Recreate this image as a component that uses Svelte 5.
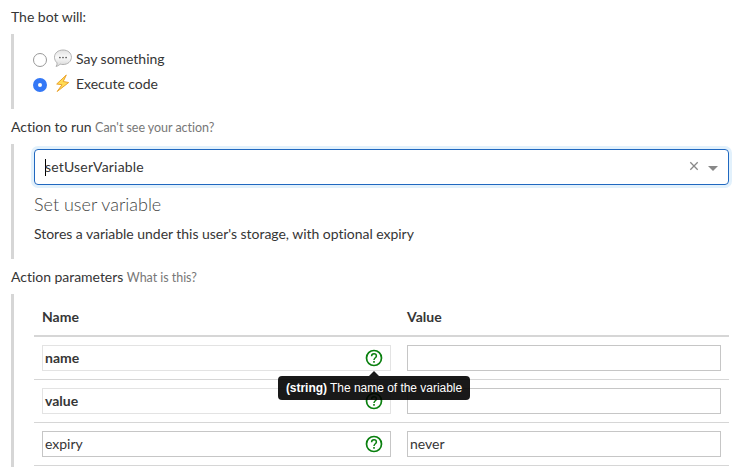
<script>
  let kind = $state('code');
  let rows = $state([
    { name: 'name', value: '', required: true, tip: 'The name of the variable' },
    { name: 'value', value: '', required: true },
    { name: 'expiry', value: 'never', required: false }
  ]);
</script>

<main>
  <div class="label">The bot will:</div>
  <section class="kinds">
    <label class="kind">
      <span class="radio" class:on={kind === 'say'}></span>
      <input type="radio" bind:group={kind} value="say" />
      <svg class="emoji" width="20" height="20" viewBox="0 0 20 20">
        <defs>
          <linearGradient id="bubble" x1="0" y1="0" x2="0" y2="1">
            <stop offset="0" stop-color="#e2e2e2" />
            <stop offset=".45" stop-color="#fafafa" />
            <stop offset="1" stop-color="#d6d6d6" />
          </linearGradient>
        </defs>
        <path d="M10 1c4.900 0 8.400 3 8.400 7.200s-3.500 7.300-8.400 7.300c-1 0-2-.1-2.900-.4-1.100 1.200-2.500 2.100-4.100 2.300.8-1 1.200-2.200 1.100-3.500C2.500 12.500 1.500 10.500 1.500 8.200 1.500 4 5.100 1 10 1z" fill="url(#bubble)" stroke="#aaa" stroke-width=".9" />
        <g fill="#555">
          <circle cx="6.900" cy="8.500" r=".85" />
          <circle cx="10" cy="8.500" r=".85" />
          <circle cx="13.100" cy="8.500" r=".85" />
        </g>
      </svg>
      <span>Say something</span>
    </label>
    <label class="kind">
      <span class="radio" class:on={kind === 'code'}></span>
      <input type="radio" bind:group={kind} value="code" />
      <svg class="emoji" width="20" height="20" viewBox="0 0 20 20">
        <path d="M13.300 1 3.700 10l5.300.7-4.800 6.800L15.700 8.500l-5.500-1z" fill="#ffdc55" stroke="#eba32d" stroke-width="1" stroke-linejoin="round" />
      </svg>
      <span>Execute code</span>
    </label>
  </section>

  <div class="label">Action to run <small>Can't see your action?</small></div>
  <section class="action">
    <div class="select">
      <i class="caret"></i>
      <span class="chosen">setUserVariable</span>
      <svg class="clear" width="10" height="10" viewBox="0 0 10 10"><path d="M1.300 1.300l7.400 7.400M8.700 1.300 1.300 8.700" stroke="#888" stroke-width="1.300" fill="none" /></svg>
      <svg class="arrow" width="10" height="5" viewBox="0 0 10 5"><path d="M0 0h10L5 5z" fill="#888" /></svg>
    </div>
    <h4>Set user variable</h4>
    <p>Stores a variable under this user's storage, with optional expiry</p>
  </section>

  <div class="label">Action parameters <small>What is this?</small></div>
  <section class="params">
    <div class="row head"><div>Name</div><div>Value</div></div>
    {#each rows as row}
      <div class="row">
        <div>
          <div class="field" class:required={row.required}>
            <span>{row.name}</span>
            <span class="help">
              <svg width="18" height="18" viewBox="0 0 18 18" fill="none" stroke="#0a800f">
                <circle cx="9" cy="9" r="7.500" stroke-width="1.700" />
                <path d="M6.600 7.200c0-1.500 1-2.400 2.400-2.400s2.400.9 2.400 2.200c0 1.700-2.400 1.900-2.400 4" stroke-width="1.500" />
                <path d="M9 12.100v1.600" stroke-width="1.600" />
              </svg>
              {#if row.tip}
                <span class="tip"><b>(string)</b> {row.tip}</span>
              {/if}
            </span>
          </div>
        </div>
        <div><div class="field">{row.value}</div></div>
      </div>
    {/each}
  </section>
</main>

<style>
  :global(body) { background: #fff; overflow: hidden; }
  main {
    box-sizing: border-box;
    height: 467px;
    overflow: hidden;
    padding: 7px 8px 0 11px;
    font: 14px/20px Lato, sans-serif;
    color: #363636;
  }
  .label { height: 20px; margin-bottom: 7px; white-space: nowrap; letter-spacing: -.03px; }
  small { font-size: 12.500px; letter-spacing: -.04px; color: #777; }
  section {
    box-sizing: border-box;
    border-left: 3px solid #d6d6d6;
    padding-left: 20px;
    margin-bottom: 8px;
  }
  .kinds { height: 75px; padding-top: 12px; }
  .kind { display: flex; align-items: center; height: 25px; letter-spacing: -.03px; }
  .kind input { position: absolute; opacity: 0; }
  .radio {
    box-sizing: border-box;
    width: 14px;
    height: 14px;
    margin: 2px 6px 0 -1px;
    border: 1px solid #999;
    border-radius: 50%;
    background: #fff;
  }
  .radio.on { border: 5px solid #3478f6; }
  .emoji { margin-right: 3px; }
  .action { height: 115px; padding-top: 5px; }
  .select {
    box-sizing: border-box;
    width: 695px;
    height: 36px;
    display: flex;
    align-items: center;
    padding: 0 10px;
    border: 1px solid #2068c0;
    border-radius: 4px;
    box-shadow: 0 0 0 3px #e2f1fc;
  }
  .caret { width: 1px; height: 17px; margin-right: -1px; background: #000; }
  .chosen { flex: 1; letter-spacing: .2px; }
  .clear { margin-top: -2px; }
  .arrow { margin: 2px 0 0 9px; }
  h4 { margin: 9px 0 10px; font-size: 18px; line-height: 20px; font-weight: 300; color: #444; }
  p { margin: 0; letter-spacing: -.03px; }
  .params { height: 200px; }
  .row {
    box-sizing: border-box;
    display: grid;
    grid-template-columns: 365px 330px;
    width: 695px;
    height: 43px;
    border-bottom: 1px solid #d6d6d6;
  }
  .row > div { padding: 8px; }
  .head { border-bottom-width: 2px; font-weight: 700; }
  .head > div { padding-top: 13px; }
  .field {
    box-sizing: border-box;
    height: 26px;
    display: flex;
    align-items: center;
    justify-content: space-between;
    padding: 0 7px 0 2px;
    border: 1px solid #c6c6c6;
  }
  .field.required { border-color: #e3e3e3; font-weight: 700; }
  .help { position: relative; height: 18px; }
  .help svg { display: block; }
  .tip {
    position: absolute;
    z-index: 1;
    top: 27px;
    left: 50%;
    transform: translateX(-50%);
    box-sizing: border-box;
    width: 192px;
    height: 24px;
    border-radius: 4px;
    background: rgba(0, 0, 0, .9);
    color: #fff;
    font: 12px/24px "Liberation Sans", Arial, sans-serif;
    letter-spacing: -.03px;
    text-align: center;
    white-space: nowrap;
  }
  .tip::before {
    content: "";
    position: absolute;
    top: -5px;
    left: 91px;
    border: 5px solid transparent;
    border-top: 0;
    border-bottom-color: rgba(0, 0, 0, .9);
  }
</style>
